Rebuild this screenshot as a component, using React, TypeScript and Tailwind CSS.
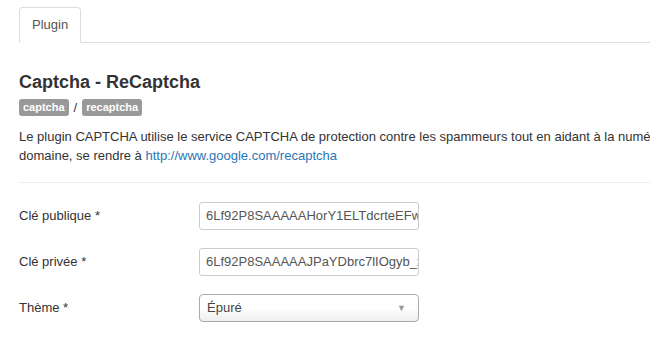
import React from "react";

export default function App() {
  return (
    <div className="w-[650px] h-[350px] overflow-hidden bg-white font-['Liberation_Sans',Arial,sans-serif] text-[13px] leading-[18px] text-[#333]">
      <div className="pl-[19px] pt-[7px]">
        <div className="flex border-b border-[#ddd]">
          <div className="-mb-px border border-[#ddd] border-b-white bg-white rounded-t-[4px] px-[12px] pt-[8px] pb-[8px] text-[#555]">
            Plugin
          </div>
        </div>

        <h1 className="mt-[28px] text-[18px] leading-[22px] font-bold text-[#333]">Captcha - ReCaptcha</h1>

        <div className="mt-[6px] flex items-center gap-[5px]">
          <span className="rounded-[3px] bg-[#999] px-[4px] text-[11px] leading-[17px] font-bold text-white">captcha</span>
          <span className="text-[#333] leading-[17px]">/</span>
          <span className="rounded-[3px] bg-[#999] px-[4px] text-[11px] leading-[17px] font-bold text-white">recaptcha</span>
        </div>

        <p className="mt-[11px] whitespace-nowrap leading-[19px]">
          Le plugin CAPTCHA utilise le service CAPTCHA de protection contre les spammeurs tout en aidant à la numérisation de livres anciens. Pour obtenir une clé publique et privée pour votre nom de
          <br />
          domaine, se rendre à <a className="text-[#2a76b8]" href="#">http://www.google.com/recaptcha</a>
        </p>

        <div className="mt-[17px] border-t border-[#eee]" />

        <div className="mt-[19px] flex flex-col gap-[18px]">
          <div className="flex items-center">
            <div className="w-[180px]">Clé publique *</div>
            <div className="w-[220px] h-[28px] border border-[#ccc] rounded-[3px] px-[6px] flex items-center overflow-hidden whitespace-nowrap text-[#555]">
              6Lf92P8SAAAAAHorY1ELTdcrteEFwXZkT3x
            </div>
          </div>
          <div className="flex items-center">
            <div className="w-[180px]">Clé privée *</div>
            <div className="w-[220px] h-[28px] border border-[#ccc] rounded-[3px] px-[6px] flex items-center overflow-hidden whitespace-nowrap text-[#555]">
              6Lf92P8SAAAAAJPaYDbrc7lIOgyb_xq9Lmn
            </div>
          </div>
          <div className="flex items-center">
            <div className="w-[180px]">Thème *</div>
            <div className="w-[220px] h-[28px] border border-[#aaa] rounded-[4px] pl-[7px] pr-[12px] flex items-center justify-between bg-gradient-to-b from-white from-50% to-[#eee] text-[#444]">
              <span>Épuré</span>
              <span className="text-[9px] text-[#999]">▼</span>
            </div>
          </div>
        </div>
      </div>
    </div>
  );
}
